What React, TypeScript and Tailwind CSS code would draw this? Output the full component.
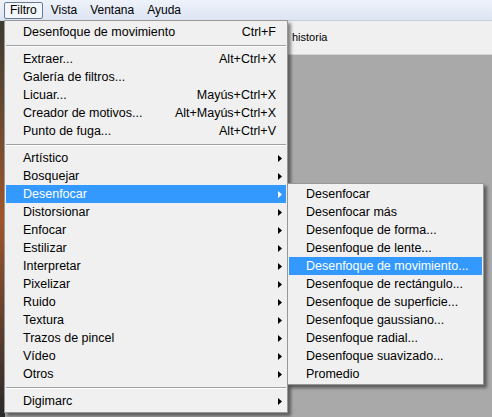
import React from 'react';

type Item =
  | { kind: 'item'; label: string; shortcut?: string; sub?: boolean; active?: boolean }
  | { kind: 'sep' };

const mainItems: Item[] = [
  { kind: 'item', label: 'Desenfoque de movimiento', shortcut: 'Ctrl+F' },
  { kind: 'sep' },
  { kind: 'item', label: 'Extraer...', shortcut: 'Alt+Ctrl+X' },
  { kind: 'item', label: 'Galería de filtros...' },
  { kind: 'item', label: 'Licuar...', shortcut: 'Mayús+Ctrl+X' },
  { kind: 'item', label: 'Creador de motivos...', shortcut: 'Alt+Mayús+Ctrl+X' },
  { kind: 'item', label: 'Punto de fuga...', shortcut: 'Alt+Ctrl+V' },
  { kind: 'sep' },
  { kind: 'item', label: 'Artístico', sub: true },
  { kind: 'item', label: 'Bosquejar', sub: true },
  { kind: 'item', label: 'Desenfocar', sub: true, active: true },
  { kind: 'item', label: 'Distorsionar', sub: true },
  { kind: 'item', label: 'Enfocar', sub: true },
  { kind: 'item', label: 'Estilizar', sub: true },
  { kind: 'item', label: 'Interpretar', sub: true },
  { kind: 'item', label: 'Pixelizar', sub: true },
  { kind: 'item', label: 'Ruido', sub: true },
  { kind: 'item', label: 'Textura', sub: true },
  { kind: 'item', label: 'Trazos de pincel', sub: true },
  { kind: 'item', label: 'Vídeo', sub: true },
  { kind: 'item', label: 'Otros', sub: true },
  { kind: 'sep' },
  { kind: 'item', label: 'Digimarc', sub: true },
];

const blurItems = [
  'Desenfocar',
  'Desenfocar más',
  'Desenfoque de forma...',
  'Desenfoque de lente...',
  'Desenfoque de movimiento...',
  'Desenfoque de rectángulo...',
  'Desenfoque de superficie...',
  'Desenfoque gaussiano...',
  'Desenfoque radial...',
  'Desenfoque suavizado...',
  'Promedio',
];

const Arrow = ({ white }: { white?: boolean }) => (
  <svg width="4" height="7" viewBox="0 0 4 7" className="shrink-0">
    <path d="M0 0 L4 3.5 L0 7 Z" fill={white ? '#ffffff' : '#000000'} />
  </svg>
);

const MenuRow = ({ item }: { item: Item }) => {
  if (item.kind === 'sep') {
    return (
      <div className="h-[9px] flex items-center px-[1px]">
        <div className="w-full border-t border-[#a0a0a0] border-b border-b-white" />
      </div>
    );
  }
  return (
    <div
      className={
        'h-[18px] flex items-center pl-[17px] pr-[4px] mx-[1px] ' +
        (item.active ? 'bg-[#3399ff] text-white' : 'text-black')
      }
    >
      <span className="flex-1">{item.label}</span>
      {item.shortcut && <span className="mr-[6px]">{item.shortcut}</span>}
      {item.sub && <Arrow white={item.active} />}
    </div>
  );
};

export default function App() {
  return (
    <div
      className="relative w-[492px] h-[417px] overflow-hidden bg-[#a9a9a9] text-[12.5px]"
      style={{ fontFamily: '"Liberation Sans", Arial, sans-serif' }}
    >
      {/* menu bar */}
      <div className="h-[21px] flex items-center pl-[4px] text-[12px] bg-gradient-to-b from-[#eef2fa] to-[#dde4f3] border-b border-[#c8cfe0]">
        <div className="h-[17px] px-[5px] flex items-center border border-[#6b7a93] rounded-[2px] bg-[#f3f6fb]">
          Filtro
        </div>
        <div className="ml-[8px]">Vista</div>
        <div className="ml-[13px]">Ventana</div>
        <div className="ml-[13px]">Ayuda</div>
      </div>

      {/* photoshop workspace */}
      <div className="flex h-[396px]">
        <div className="w-[5px] bg-gradient-to-b from-[#3b3b30] via-[#a0552a] to-[#2a2a2a]" />
        <div className="flex-1 flex flex-col">
          <div className="h-[34px] bg-[#f0f0f0] border-b border-[#d4d4d4] flex items-center pl-[287px] text-[11px]">
            historia
          </div>
          <div className="flex-1 bg-[#a9a9a9]" />
        </div>
      </div>

      {/* Filtro menu */}
      <div className="absolute left-[4px] top-[20px] w-[284px] py-[2px] bg-[#f0f0f0] border border-[#979797] shadow-[3px_3px_3px_rgba(0,0,0,0.45)]">
        {mainItems.map((it, i) => (
          <MenuRow key={i} item={it} />
        ))}
      </div>

      {/* Desenfocar submenu */}
      <div className="absolute left-[287px] top-[183px] w-[197px] py-[1px] bg-[#f0f0f0] border border-[#979797] shadow-[3px_3px_3px_rgba(0,0,0,0.45)]">
        {blurItems.map((label) => (
          <div
            key={label}
            className={
              'h-[18px] flex items-center pl-[17px] mx-[1px] ' +
              (label === 'Desenfoque de movimiento...' ? 'bg-[#3399ff] text-white' : 'text-black')
            }
          >
            {label}
          </div>
        ))}
      </div>
    </div>
  );
}
